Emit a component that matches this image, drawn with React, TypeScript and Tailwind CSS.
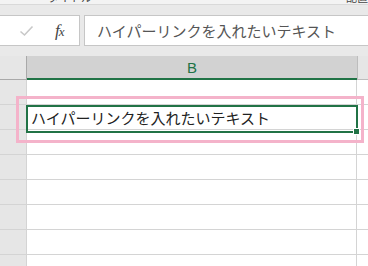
import React from "react";

const JP = "font-['Noto_Sans_CJK_JP','Noto_Sans',sans-serif]";
const TEXT = "ハイパーリンクを入れたいテキスト";

function Row({ selected }: { selected?: boolean }) {
  return (
    <div className="flex h-[25px] border-b border-[#d4d4d4]">
      <div className="w-[27px] shrink-0 bg-[#e6e6e6] border-r border-[#d4d4d4]" />
      <div className="w-[330px] shrink-0 border-r border-[#d4d4d4] flex items-center pl-[4px]">
        {selected && (
          <span className="text-[15px] text-[#222] leading-none whitespace-nowrap">{TEXT}</span>
        )}
      </div>
      <div className="flex-1" />
    </div>
  );
}

export default function App() {
  return (
    <div className={`relative w-[368px] h-[266px] overflow-hidden bg-white ${JP}`}>
      {/* ribbon group labels, only their lower edge shows */}
      <div className="relative h-[5px] bg-[#f3f3f3] border-b border-[#d9d9d9] overflow-hidden">
        <span className="absolute left-[48px] top-[-10px] text-[11px] text-[#444] leading-[14px]">タイトル</span>
        <span className="absolute left-[186px] top-[-10px] text-[11px] text-[#444] leading-[14px]">・</span>
        <span className="absolute left-[346px] top-[-10px] text-[11px] text-[#444] leading-[14px]">配置</span>
      </div>

      {/* formula bar */}
      <div className="h-[51px] bg-[#e9e9e9] pt-[10px] flex gap-[4px]">
        <div className="w-[80px] h-[31px] bg-white border border-l-0 border-[#c6c6c6] flex items-center">
          <svg className="ml-[19px]" width="15" height="12" viewBox="0 0 15 12">
            <path d="M1.5 6.5 L5.5 10 L13.5 1.5" fill="none" stroke="#c8c8c8" strokeWidth="1.6" />
          </svg>
          <span className="ml-[21px] font-['Liberation_Serif',serif] italic text-[17px] text-[#444] leading-none tracking-[-1px]">
            f<span className="text-[13px]">x</span>
          </span>
        </div>
        <div className="flex-1 h-[31px] bg-white border border-r-0 border-[#c6c6c6] flex items-center pl-[12px]">
          <span className="text-[15px] text-[#555] leading-none whitespace-nowrap">{TEXT}</span>
        </div>
      </div>

      {/* column headers */}
      <div className="flex h-[24px]">
        <div className="w-[27px] shrink-0 bg-[#e6e6e6] border-r border-b border-[#a9a9a9]" />
        <div className="w-[330px] shrink-0 bg-[#d2d2d2] border-b-2 border-[#217346] flex items-center justify-center">
          <span className="font-['Liberation_Sans',sans-serif] text-[15px] text-[#217346] leading-none">B</span>
        </div>
        <div className="flex-1 bg-[#e6e6e6] border-l border-b border-[#bdbdbd]" />
      </div>

      {/* rows */}
      <div>
        <Row />
        <Row selected />
        <Row />
        <Row />
        <Row />
        <Row />
        <Row />
        <Row />
      </div>

      {/* active cell */}
      <div className="absolute left-[26px] top-[105px] w-[332px] h-[28px] border-2 border-[#217346]" />
      <div className="absolute left-[353px] top-[128px] w-[7px] h-[7px] bg-[#217346] border border-white" />

      {/* pink highlight */}
      <div className="absolute left-[16px] top-[96px] w-[348px] h-[47px] border-[3px] border-[#f4b3ca]" />
    </div>
  );
}
